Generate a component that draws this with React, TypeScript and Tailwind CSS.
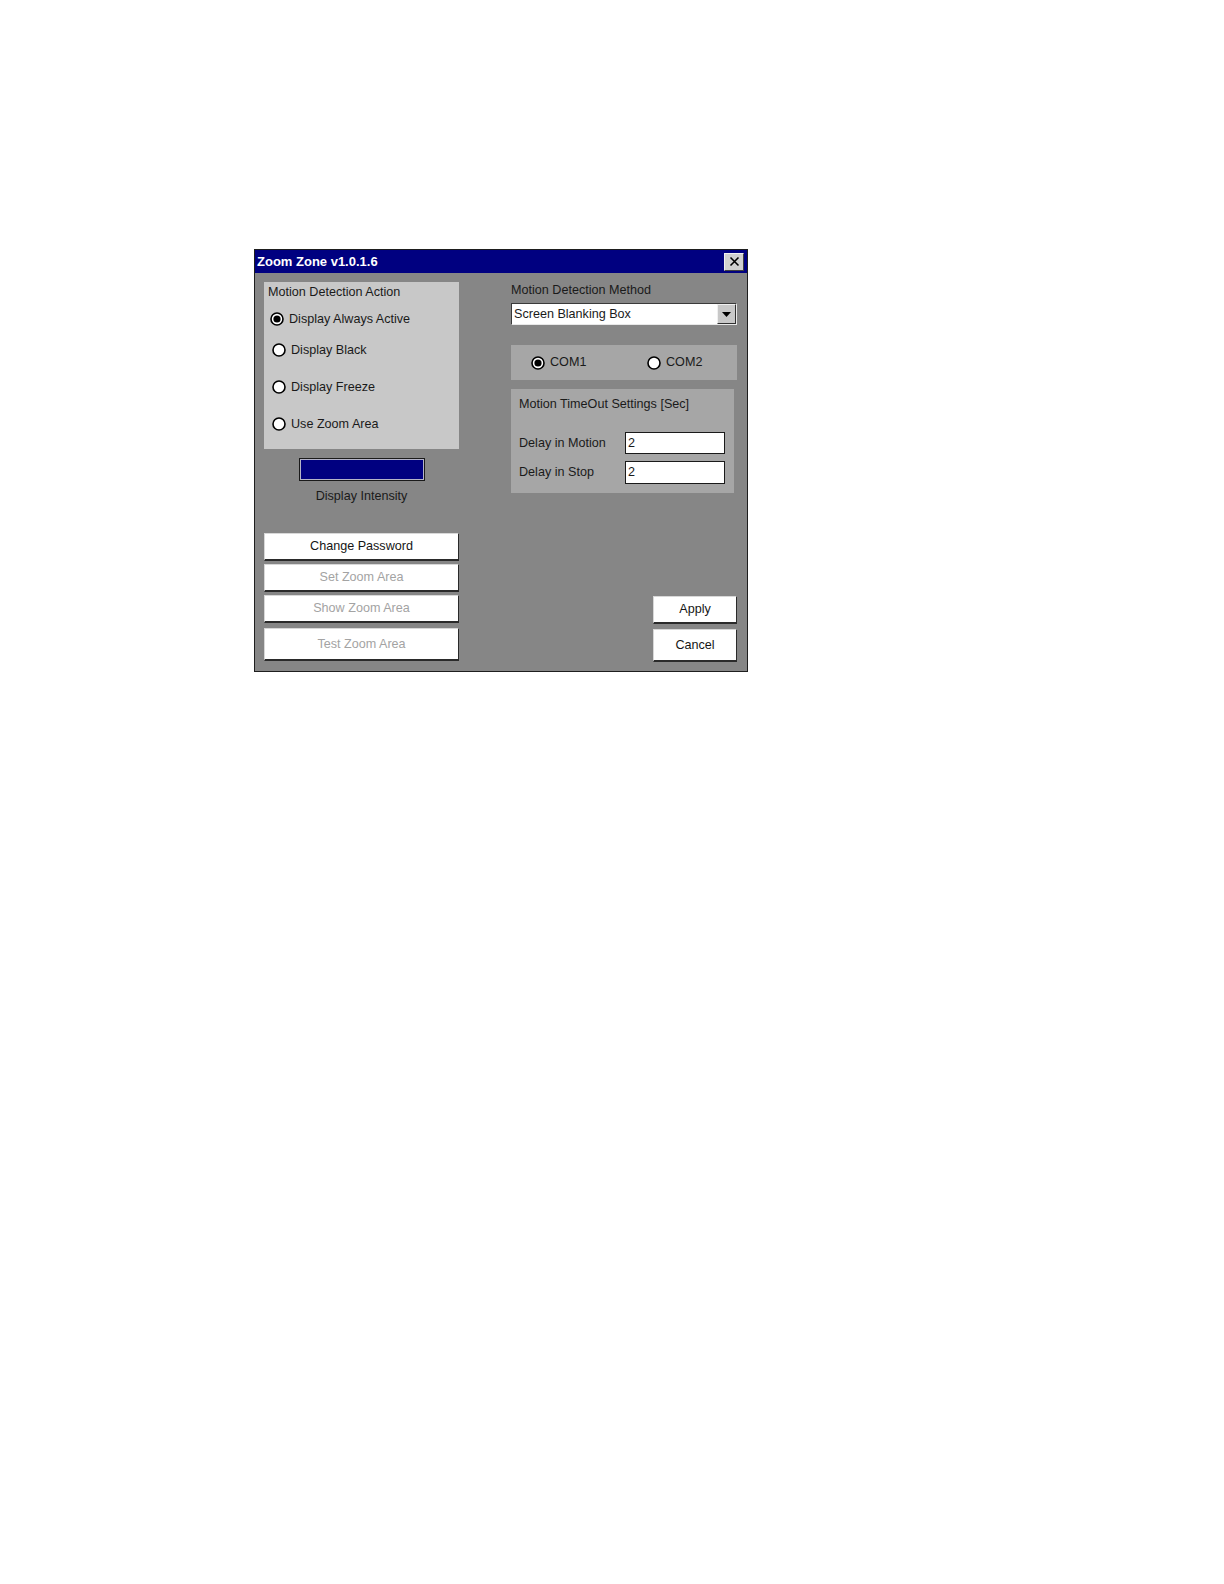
import React from "react"

const font = { fontFamily: '"Liberation Sans", Arial, sans-serif' }

function Radio({ checked = false }: { checked?: boolean }) {
  return (
    <svg width="14" height="14" viewBox="0 0 14 14" className="shrink-0">
      <circle cx="7" cy="7" r="6" fill="#ffffff" stroke="#000000" strokeWidth="1.6" />
      {checked && <circle cx="7" cy="7" r="3.6" fill="#000000" />}
    </svg>
  )
}

function RadioRow({ label, checked, className }: { label: string; checked?: boolean; className: string }) {
  return (
    <div className={"flex h-[18px] items-center gap-[5px] " + className}>
      <Radio checked={checked} />
      <span className="leading-[15px]">{label}</span>
    </div>
  )
}

function WinButton({
  label,
  disabled,
  className,
}: {
  label: string
  disabled?: boolean
  className: string
}) {
  return (
    <button
      className={
        "flex items-center justify-center bg-white border-t border-l border-r border-b-2 border-t-[#d8d8d8] border-l-[#d8d8d8] border-r-[#2a2a2a] border-b-[#2a2a2a] leading-[15px] " +
        (disabled ? "text-[#a3a3a3] " : "text-[#151515] ") +
        className
      }
    >
      {label}
    </button>
  )
}

export default function App() {
  return (
    <div className="min-h-[1584px] bg-white pl-[254px] pt-[249px]" style={font}>
      <div className="flex h-[423px] w-[494px] flex-col border border-[#1e1e1e] bg-[#868686] text-[12.6px] text-[#1a1a1a]">
        {/* title bar */}
        <div className="flex h-[23px] items-center justify-between bg-[#000080] pl-[2px] pr-[3px]">
          <span className="text-[13px] font-bold leading-[15px] text-white">Zoom Zone v1.0.1.6</span>
          <button className="flex h-[18px] w-[20px] items-center justify-center border border-t-[#f0f0f0] border-l-[#f0f0f0] border-r-[#404040] border-b-[#404040] bg-[#d0d0d0]">
            <svg width="11" height="11" viewBox="0 0 11 11">
              <path d="M1.5 1.5 L9.5 9.5 M9.5 1.5 L1.5 9.5" stroke="#000" strokeWidth="1.6" />
            </svg>
          </button>
        </div>

        {/* body */}
        <div className="flex flex-1 pl-[9px] pt-[9px]">
          {/* left column */}
          <div className="flex w-[195px] flex-col">
            <div className="flex h-[167px] flex-col bg-[#c8c8c8] pt-[3px]">
              <span className="pl-[4px] leading-[15px]">Motion Detection Action</span>
              <RadioRow label="Display Always Active" checked className="mt-[10px] pl-[6px]" />
              <RadioRow label="Display Black" className="mt-[13px] pl-[8px]" />
              <RadioRow label="Display Freeze" className="mt-[19px] pl-[8px]" />
              <RadioRow label="Use Zoom Area" className="mt-[19px] pl-[8px]" />
            </div>

            <div className="mt-[9px] h-[23px] w-[126px] self-center border border-[#1a1a1a] bg-[#000080] shadow-[inset_0_0_0_1px_#b4b4c8]" />
            <span className="mt-[8px] self-center leading-[15px]">Display Intensity</span>

            <WinButton label="Change Password" className="mt-[29px] h-[28px] w-full" />
            <WinButton label="Set Zoom Area" disabled className="mt-[3px] h-[28px] w-full" />
            <WinButton label="Show Zoom Area" disabled className="mt-[3px] h-[28px] w-full" />
            <WinButton label="Test Zoom Area" disabled className="mt-[5px] h-[33px] w-full" />
          </div>

          {/* right column */}
          <div className="ml-[52px] flex w-[226px] flex-col">
            <span className="mt-[1px] leading-[15px]">Motion Detection Method</span>
            <div className="mt-[5px] flex h-[22px] items-center border border-t-[#3a3a3a] border-l-[#3a3a3a] border-r-[#e8e8e8] border-b-[#e8e8e8] bg-white">
              <span className="flex-1 pl-[2px] leading-[15px]">Screen Blanking Box</span>
              <div className="flex h-[20px] w-[19px] items-center justify-center border border-t-[#f0f0f0] border-l-[#f0f0f0] border-r-[#303030] border-b-[#303030] bg-[#c8c8c8]">
                <svg width="9" height="5" viewBox="0 0 9 5">
                  <path d="M0 0 H9 L4.5 5 Z" fill="#000" />
                </svg>
              </div>
            </div>

            <div className="mt-[20px] flex h-[35px] items-center bg-[#a6a6a6] pl-[20px]">
              <div className="flex w-[116px] items-center gap-[5px]">
                <Radio checked />
                <span className="leading-[15px]">COM1</span>
              </div>
              <div className="flex items-center gap-[5px]">
                <Radio />
                <span className="leading-[15px]">COM2</span>
              </div>
            </div>

            <div className="mt-[9px] flex h-[104px] w-[223px] flex-col bg-[#a6a6a6] pl-[8px] pt-[8px]">
              <span className="leading-[15px]">Motion TimeOut Settings [Sec]</span>
              <div className="mt-[20px] flex h-[22px] items-center">
                <span className="w-[106px] leading-[15px]">Delay in Motion</span>
                <div className="flex h-[22px] w-[100px] items-center border border-[#1a1a1a] bg-white pl-[2px] leading-[15px]">2</div>
              </div>
              <div className="mt-[7px] flex h-[23px] items-center">
                <span className="w-[106px] leading-[15px]">Delay in Stop</span>
                <div className="flex h-[23px] w-[100px] items-center border border-[#1a1a1a] bg-white pl-[2px] leading-[15px]">2</div>
              </div>
            </div>

            <WinButton label="Apply" className="mt-[103px] h-[28px] w-[84px] self-end" />
            <WinButton label="Cancel" className="mt-[5px] h-[33px] w-[84px] self-end" />
          </div>
        </div>
      </div>
    </div>
  )
}
